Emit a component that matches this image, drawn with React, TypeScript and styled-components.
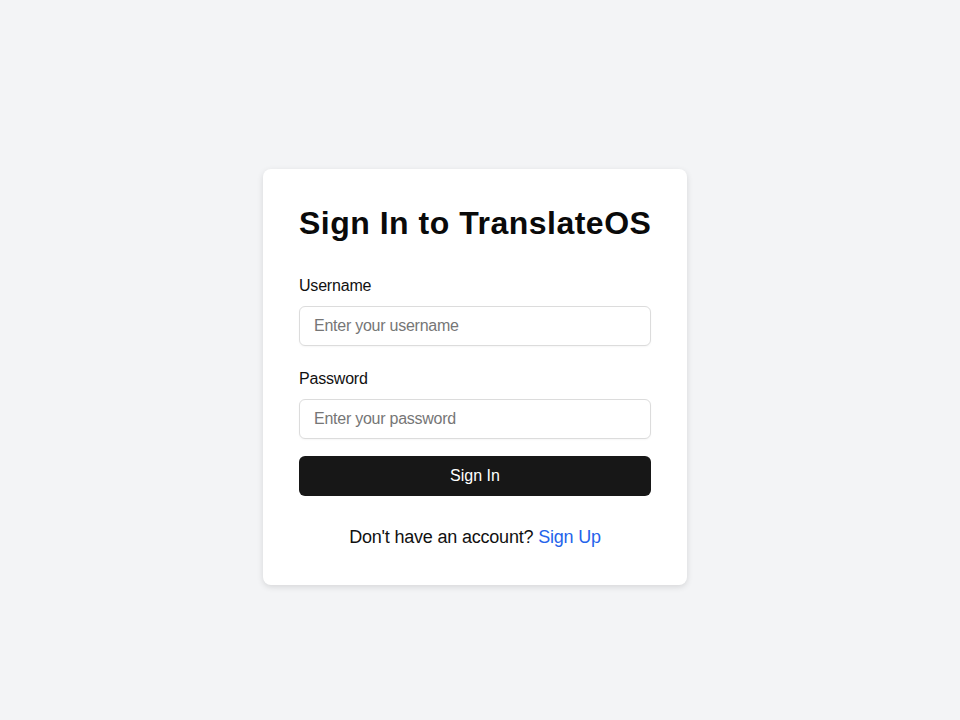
import React, { useState } from 'react';
import styled, { createGlobalStyle } from 'styled-components';

const GlobalStyle = createGlobalStyle`
    * {
        box-sizing: border-box;
    }
    body {
        margin: 0;
        background-color: #f3f4f6;
        font-family: 'Liberation Sans', Arial, sans-serif;
        color: #111111;
    }
`;

const Page = styled.div`
    min-height: 100vh;
    display: flex;
    justify-content: center;
    align-items: center;
    padding: 33px 10px 0 0;
`;

const Card = styled.form`
    width: 424px;
    padding: 36px;
    background-color: white;
    border-radius: 8px;
    box-shadow: 0 2px 6px rgba(0, 0, 0, 0.12);
`;

const Title = styled.h1`
    margin: 0 0 32px;
    font-size: 32px;
    font-weight: 700;
    line-height: 37px;
    letter-spacing: 0.5px;
    white-space: nowrap;
    color: #0a0a0a;
`;

const Field = styled.div`
    margin-bottom: 21px;

    &:last-of-type {
        margin-bottom: 17px;
    }
`;

const Label = styled.label`
    display: block;
    margin-bottom: 8px;
    font-size: 16px;
    line-height: 24px;
    letter-spacing: -0.2px;
    color: #111111;
`;

const Input = styled.input`
    display: block;
    width: 100%;
    height: 40px;
    padding: 0 14px;
    border: 1px solid #dcdcdc;
    border-radius: 6px;
    font-family: inherit;
    font-size: 16px;
    letter-spacing: -0.25px;
    color: #111111;
    background: white;
    box-shadow: 0 1px 2px rgba(0, 0, 0, 0.04);
    outline: none;

    &::placeholder {
        color: #767676;
    }
`;

const SubmitButton = styled.button`
    display: block;
    width: 100%;
    height: 40px;
    border: none;
    border-radius: 6px;
    background-color: #171717;
    color: white;
    font-family: inherit;
    font-size: 16px;
    cursor: pointer;
`;

const Footer = styled.p`
    margin: 29px 0 0;
    text-align: center;
    font-size: 18px;
    line-height: 24px;
    letter-spacing: -0.2px;
    color: #111111;

    a {
        color: #2563eb;
        text-decoration: none;
    }
`;

const App: React.FC = () => {
    const [username, setUsername] = useState<string>('');
    const [password, setPassword] = useState<string>('');

    // 로그인 제출
    const onSubmit = (event: React.FormEvent<HTMLFormElement>) => {
        event.preventDefault();
    };

    return (
        <>
            <GlobalStyle />
            <Page>
                <Card onSubmit={onSubmit}>
                    <Title>Sign In to TranslateOS</Title>
                    <Field>
                        <Label htmlFor="username">Username</Label>
                        <Input
                            id="username"
                            placeholder="Enter your username"
                            value={username}
                            onChange={(e) => setUsername(e.target.value)}
                        />
                    </Field>
                    <Field>
                        <Label htmlFor="password">Password</Label>
                        <Input
                            id="password"
                            type="password"
                            placeholder="Enter your password"
                            value={password}
                            onChange={(e) => setPassword(e.target.value)}
                        />
                    </Field>
                    <SubmitButton type="submit">Sign In</SubmitButton>
                    <Footer>
                        Don't have an account? <a href="#signup">Sign Up</a>
                    </Footer>
                </Card>
            </Page>
        </>
    );
};

export default App;
